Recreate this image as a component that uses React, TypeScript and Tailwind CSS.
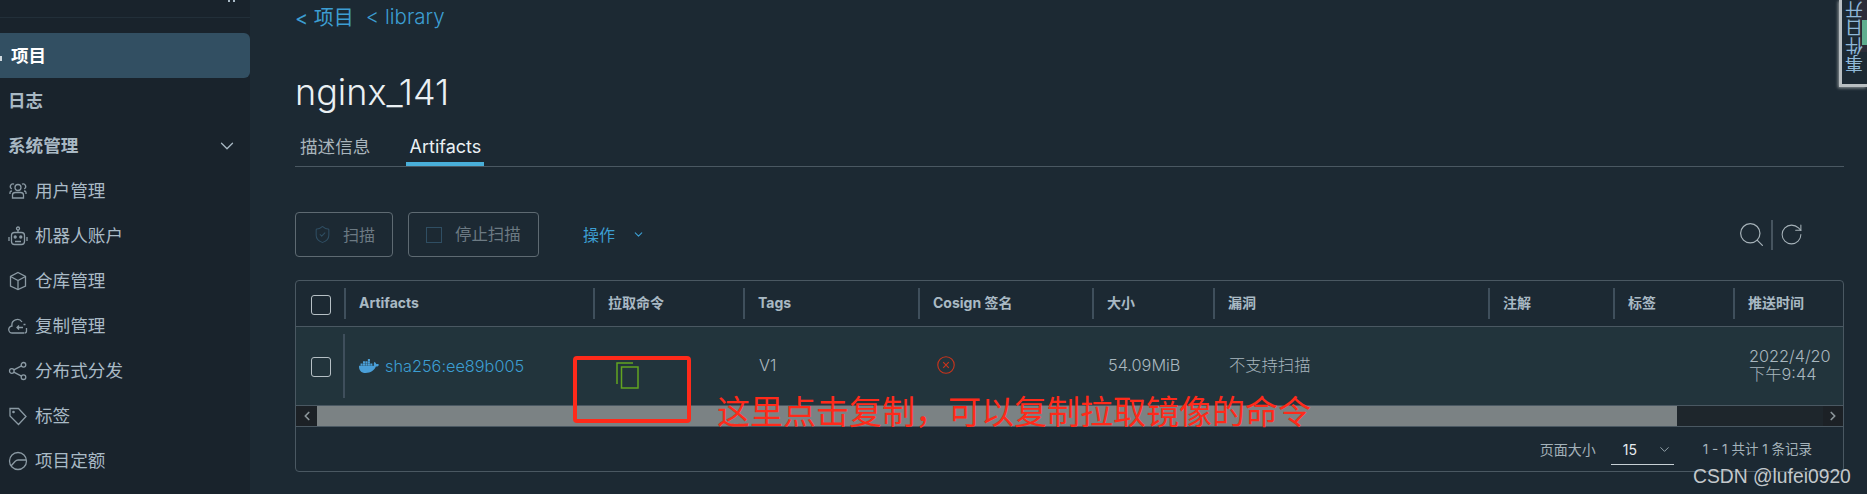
import { ChevronDown, Search, RotateCw, ShieldCheck } from "lucide-react";
import { FaDocker } from "react-icons/fa";
import type { ReactNode } from "react";

const ico = "w-[20px] h-[20px] shrink-0 fill-none stroke-[#8b9aa4] stroke-[1.3]";

const UsersIcon = () => (
  <svg viewBox="0 0 20 20" className={ico}>
    <circle cx="10" cy="6.5" r="3" />
    <path d="M4.5 17v-3c0-1.5 1.5-2.5 3-2.5h5c1.5 0 3 1 3 2.5v3z" />
    <path d="M6 3.2a2.2 2.2 0 0 0-2.2 4.6M14 3.2a2.2 2.2 0 0 1 2.2 4.6M2 13v-1.5C2 10.5 3 10 4 10M18 13v-1.5c0-1-1-1.5-2-1.5" />
  </svg>
);
const BotIcon = () => (
  <svg viewBox="0 0 20 20" className={ico}>
    <circle cx="10" cy="2.5" r="1.5" />
    <path d="M10 4v2.5" />
    <rect x="3.5" y="6.5" width="13" height="12" rx="3" />
    <path d="M1 11v4M19 11v4M7 15.5h6" />
    <circle cx="7.2" cy="11" r="1" fill="#8b9aa4" />
    <circle cx="12.8" cy="11" r="1" fill="#8b9aa4" />
  </svg>
);
const BoxIcon = () => (
  <svg viewBox="0 0 20 20" className={ico}>
    <path d="M10 1.5l7.5 4v9.5l-7.5 3.5-7.5-3.5V5.500z" />
    <path d="M2.500 5.500l7.500 4 7.500-4M10 9.500v9" />
  </svg>
);
const CloudIcon = () => (
  <svg viewBox="0 0 20 20" className={ico}>
    <path d="M16 17H4.500a3.500 3.500 0 0 1-.5-7A5.500 5.500 0 0 1 14 6" />
    <path d="M9 11.500h6M11 9.500l-2 2 2 2M17 7v.1M19 9.500v.1M15.500 8.500h2" />
    <path d="M18.500 12v3a2 2 0 0 1-2 2" />
  </svg>
);
const ShareIcon = () => (
  <svg viewBox="0 0 20 20" className={ico}>
    <circle cx="3.800" cy="10" r="2.300" />
    <circle cx="15.500" cy="3.800" r="2.300" />
    <circle cx="15.500" cy="16.200" r="2.300" />
    <path d="M5.800 8.900l7.700-4M5.800 11.100l7.700 4" />
  </svg>
);
const TagIcon = () => (
  <svg viewBox="0 0 20 20" className={ico}>
    <path d="M2 2.500h8.500l7.500 8-7.500 8-8.500-8.500z" />
    <circle cx="5.500" cy="6" r="0.700" />
  </svg>
);
const QuotaIcon = () => (
  <svg viewBox="0 0 20 20" className={ico}>
    <circle cx="10" cy="10" r="8.500" />
    <path d="M3 15l4-4.500c1-1 2-1.500 3-1.500h8" />
  </svg>
);

function NavItem({ icon, label }: { icon: ReactNode; label: string }) {
  return (
    <div className="flex h-[45px] items-center gap-[7px] pl-[8px] text-[17.6px] text-[#a9bac6]">
      {icon}
      <span className="pt-[1px]">{label}</span>
    </div>
  );
}

const headers = ["Artifacts", "拉取命令", "Tags", "Cosign 签名", "大小", "漏洞", "注解", "标签", "推送时间"];
const gridCols = "grid grid-cols-[48px_249px_150px_175px_174px_121px_275px_125px_120px_1fr]";

export default function App() {
  return (
    <div
      className="relative flex h-[494px] w-[1867px] overflow-hidden bg-[#1c2933]"
      style={{ fontFamily: 'Inter, "Noto Sans CJK SC", sans-serif' }}
    >
      <aside className="w-[250px] shrink-0 bg-[#19232c]">
        <div className="flex h-[18px] items-start justify-end gap-[3px] border-b border-[#222f39] pr-[15px]">
          <span className="h-[2px] w-[2px] bg-[#a9bac6]" />
          <span className="h-[2px] w-[2px] bg-[#a9bac6]" />
        </div>
        <nav className="mt-[15px]">
          <div className="flex h-[45px] items-center rounded-r-[6px] bg-[#324f62] text-[17.5px] font-bold text-white">
            <span className="mt-[6px] h-[5px] w-[2px] bg-[#cfd8de]" />
            <span className="ml-[9px] pt-[1px]">项目</span>
          </div>
          <div className="flex h-[45px] items-center pl-[8px] pt-[1px] text-[17.5px] font-bold text-[#a9b9c4]">日志</div>
          <div className="flex h-[45px] items-center justify-between pl-[8px] pr-[12px] text-[17.6px] font-bold text-[#a9b9c4]">
            <span className="pt-[1px]">系统管理</span>
            <ChevronDown className="h-[22px] w-[22px] stroke-[#a9b9c4]" strokeWidth={1.4} />
          </div>
          <NavItem icon={<UsersIcon />} label="用户管理" />
          <NavItem icon={<BotIcon />} label="机器人账户" />
          <NavItem icon={<BoxIcon />} label="仓库管理" />
          <NavItem icon={<CloudIcon />} label="复制管理" />
          <NavItem icon={<ShareIcon />} label="分布式分发" />
          <NavItem icon={<TagIcon />} label="标签" />
          <NavItem icon={<QuotaIcon />} label="项目定额" />
        </nav>
      </aside>

      <main className="flex-1 pl-[45px] pr-[23px]">
        <div className="flex h-[34px] items-center gap-[12px] pt-[1px] text-[20px] text-[#3c9ed2]">
          <span>&lt; 项目</span>
          <span className="text-[20.5px] font-light">&lt; library</span>
        </div>
        <h1 className="mt-[36px] h-[45px] text-[36px] font-light leading-[45px] text-[#eaf0f3]">nginx_141</h1>
        <div className="flex h-[52px] items-end gap-[36px] border-b border-[#4a5862] pl-[5px]">
          <div className="flex h-[40px] items-center pt-[2px] text-[17.6px] text-[#a9b5bc]">描述信息</div>
          <div className="flex h-[40px] w-[78px] items-center justify-center border-b-4 border-[#49afd9] pt-[5px] text-[18px] text-[#eaf0f3]">
            Artifacts
          </div>
        </div>

        <div className="mt-[45px] flex h-[45px] items-center">
          <div className="flex h-[45px] w-[98px] items-center gap-[11px] rounded-[4px] border border-[#5e6a72] pl-[17px] text-[16px] text-[#6c7a83]">
            <ShieldCheck className="h-[19px] w-[19px] stroke-[#2f4e63]" strokeWidth={1.3} />
            <span>扫描</span>
          </div>
          <div className="ml-[15px] flex h-[45px] w-[131px] items-center gap-[13px] rounded-[4px] border border-[#5e6a72] pl-[17px] text-[16.4px] text-[#6c7a83]">
            <span className="h-[16px] w-[16px] border-[1.500px] border-[#2f4e63]" />
            <span>停止扫描</span>
          </div>
          <span className="ml-[44px] text-[16px] text-[#3c9ed2]">操作</span>
          <ChevronDown className="ml-[17px] h-[13px] w-[13px] stroke-[#3c9ed2]" strokeWidth={2} />
          <div className="ml-auto mr-[40px] flex items-center">
            <Search className="h-[29px] w-[29px] stroke-[#a6b2b9]" strokeWidth={1} />
            <span className="ml-[5px] mr-[6px] h-[30px] w-[2px] bg-[#46545f]" />
            <RotateCw className="h-[25px] w-[25px] stroke-[#a6b2b9]" strokeWidth={1} />
          </div>
        </div>

        <div className="mt-[23px] h-[192px] rounded-[4px] border border-[#4a5862]">
          <div className={`${gridCols} h-[46px] items-center border-b border-[#4a5862] text-[14px] font-bold text-[#a9b9c4]`}>
            <div className="flex justify-center pl-[1px] pt-[2px]">
              <span className="h-[20px] w-[20px] rounded-[3px] border border-[#b6c0c5]" />
            </div>
            {headers.map((h) => (
              <div key={h} className="flex h-[31px] items-center border-l-2 border-[#3f4f5c] pb-[2px] pl-[13px]">
                {h}
              </div>
            ))}
          </div>

          <div className={`${gridCols} h-[78px] items-center bg-[#22343c] text-[16.3px] font-light text-[#a9b7bf]`}>
            <div className="flex justify-center pl-[1px] pt-[2px]">
              <span className="h-[20px] w-[20px] rounded-[3px] border border-[#b6c0c5]" />
            </div>
            <div className="-ml-[1px] flex h-[64px] items-center gap-[6px] border-l-2 border-[#3f4f5c] pl-[14px] text-[#3c9ed2]">
              <FaDocker className="h-[20px] w-[20px] text-[#4a9fd8]" />
              <span>sha256:ee89b005</span>
            </div>
            <div className="pl-[23px] pt-[19px]">
              <svg viewBox="0 0 23 27" className="h-[27px] w-[23px] fill-none stroke-[#62a420] stroke-[1.500]">
                <path d="M17 1H1v21" />
                <rect x="5.500" y="5" width="16.500" height="21" />
              </svg>
            </div>
            <div className="pb-[2px] pl-[16px]">V1</div>
            <div className="pb-[2px] pl-[19px]">
              <svg viewBox="0 0 16 16" className="h-[18px] w-[18px] fill-none stroke-[#c8341c] stroke-[1]">
                <circle cx="8" cy="8" r="7.300" />
                <path d="M5.500 5.500l5 5M10.500 5.500l-5 5" />
              </svg>
            </div>
            <div className="pb-[2px] pl-[16px]">54.09MiB</div>
            <div className="pb-[2px] pl-[16px]">不支持扫描</div>
            <div />
            <div />
            <div className="pb-[2px] pl-[16px] leading-[18px] whitespace-nowrap">
              2022/4/20
              <br />
              下午9:44
            </div>
          </div>

          <div className="flex h-[22px] items-stretch border-y border-[#4a5862] bg-[#1e262c]">
            <div className="flex w-[21px] items-center justify-center bg-[#1c2126] text-[#8a9499]">
              <ChevronDown className="h-[14px] w-[14px] rotate-90" strokeWidth={3} />
            </div>
            <div className="w-[1360px] bg-[#7b8284]" />
            <div className="ml-auto flex w-[20px] items-center justify-center bg-[#1c2126] text-[#8a9499]">
              <ChevronDown className="h-[14px] w-[14px] -rotate-90" strokeWidth={3} />
            </div>
          </div>

          <div className="flex h-[45px] items-center justify-end pr-[31px] text-[14px] text-[#a4b2ba]">
            <span>页面大小</span>
            <div className="ml-[15px] flex h-[30px] w-[63px] items-center gap-[20px] border-b border-[#c7d0d5] pl-[12px] text-[#e6ecef]">
              <span>15</span>
              <ChevronDown className="h-[15px] w-[15px] stroke-[#a4b2ba]" strokeWidth={1.4} />
            </div>
            <span className="ml-[29px] whitespace-nowrap text-[13.5px]">1 - 1 共计 1 条记录</span>
          </div>
        </div>
      </main>

      <div className="absolute right-0 top-0 h-[87px] w-[28px] overflow-hidden border-b-[3px] border-l-[3px] border-[#b9bfc2] bg-[#1c2933] shadow-[-1px_1px_3px_#8f9699]">
        <div className="absolute right-0 top-0 h-[52px] w-[9px] bg-[#2a2c38]">
          <div className="ml-[4px] mt-[20px] h-[25px] w-[5px] bg-[#5fae8f]" />
        </div>
        <div className="absolute bottom-[11px] left-[5px] rotate-180 text-[18px] leading-[18px] text-[#8fb8d8] [writing-mode:vertical-rl]">
          事件日开
        </div>
      </div>

      <div className="absolute left-[573px] top-[356px] h-[67px] w-[118px] rounded-[4px] border-[4px] border-[#ff2a1a]" />
      <div className="absolute left-[717px] top-[392px] text-[33px] leading-[40px] text-[#ff2a1a] whitespace-nowrap">
        这里点击复制，可以复制拉取镜像的命令
      </div>
      <div
        className="absolute left-[1693px] top-[466px] text-[19.3px] leading-[22px] text-[#c3c8cb] whitespace-nowrap"
        style={{ fontFamily: '"Liberation Sans", sans-serif' }}
      >
        CSDN @lufei0920
      </div>
    </div>
  );
}
